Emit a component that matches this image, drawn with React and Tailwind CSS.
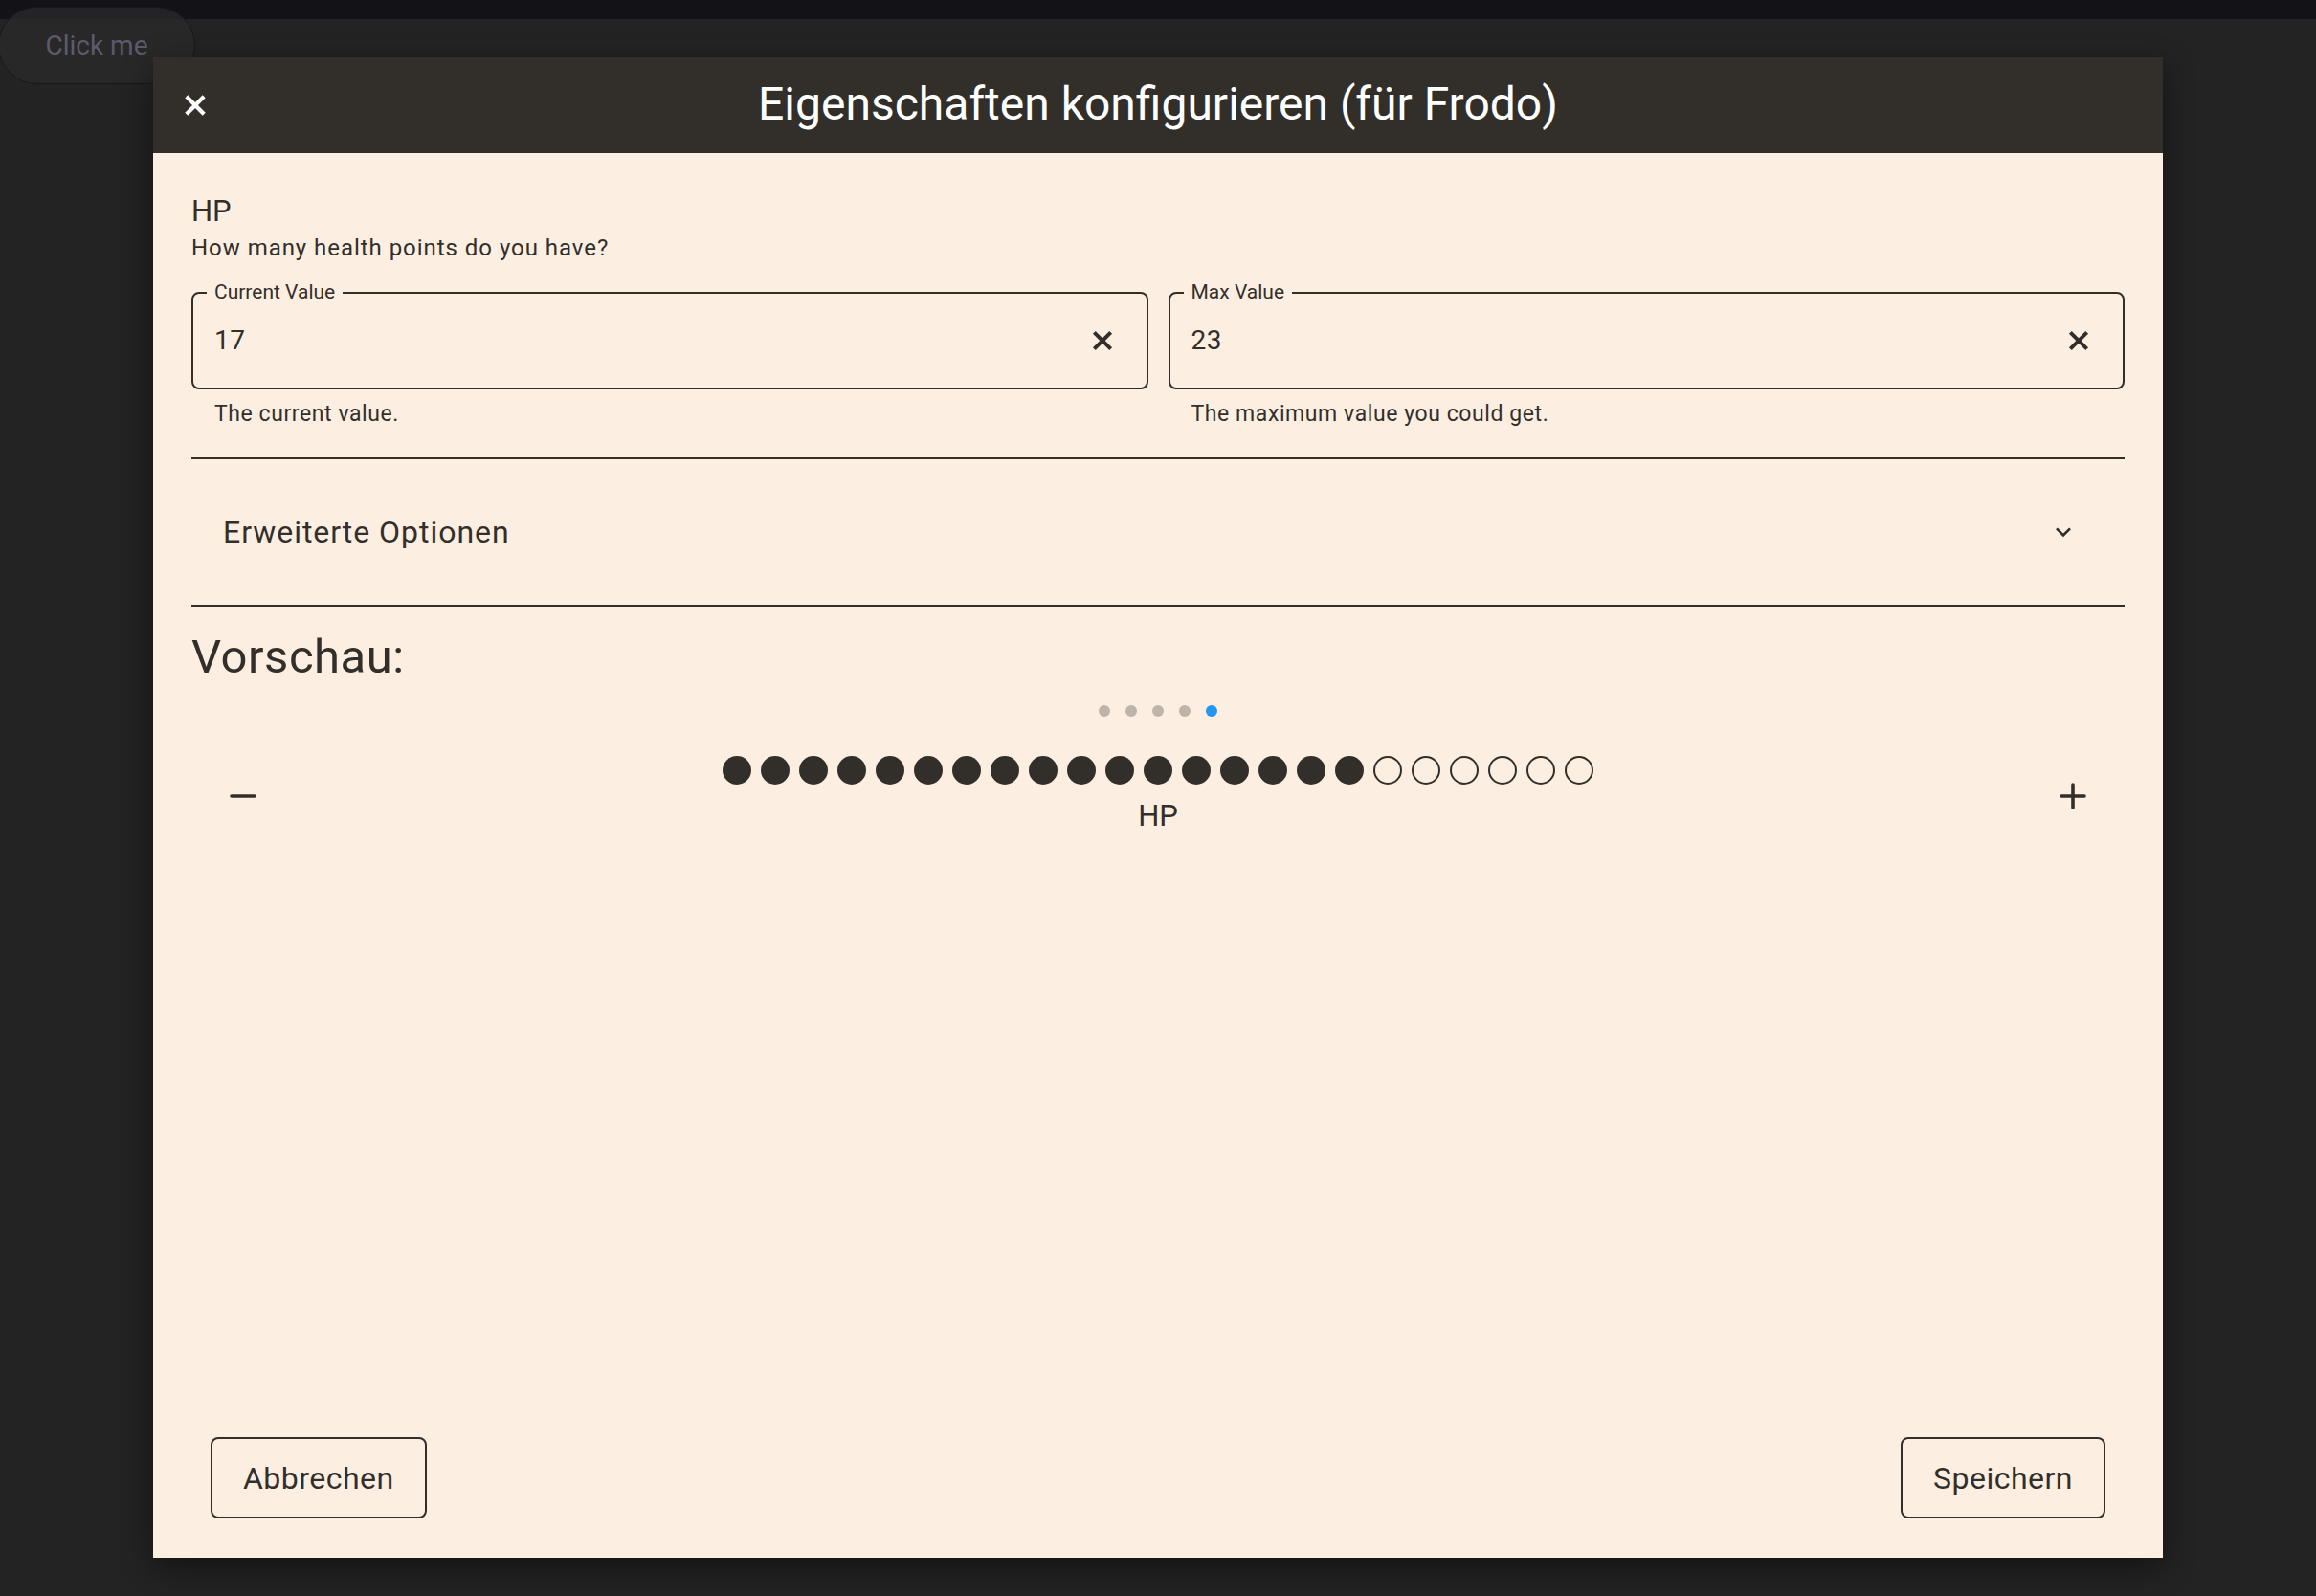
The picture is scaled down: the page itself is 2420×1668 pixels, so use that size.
import React from 'react';

const FONT = { fontFamily: 'Roboto, "Noto Sans", sans-serif' };

function CloseIcon({ className }) {
  return (
    <svg viewBox="0 0 24 24" className={className} fill="none" stroke="currentColor" strokeWidth="3">
      <path d="M5.5 5.5L18.5 18.5M18.5 5.5L5.5 18.5" />
    </svg>
  );
}

function ChevronDown({ className }) {
  return (
    <svg viewBox="0 0 24 24" className={className} fill="currentColor">
      <path d="M7.41,8.58L12,13.17L16.59,8.58L18,10L12,16L6,10L7.41,8.58Z" />
    </svg>
  );
}

function PlusMinus({ plus }) {
  return (
    <svg viewBox="0 0 30 30" className="size-[30px]" fill="none" stroke="currentColor" strokeWidth="3.6" strokeLinecap="round">
      <line x1="3" y1="15" x2="27" y2="15" />
      {plus && <line x1="15" y1="3" x2="15" y2="27" />}
    </svg>
  );
}

function Field({ label, value, hint }) {
  return (
    <div className="flex-1">
      <div className="relative flex h-[102px] items-center rounded-[8px] border-2 border-[#322f2a] pl-[22px] pr-[30px]">
        <span className="absolute left-[14px] top-[-15px] bg-[#fdeee2] px-[8px] text-[21px] leading-[26px]">{label}</span>
        <span className="flex-1 text-[28px] tracking-[0.02em]">{value}</span>
        <CloseIcon className="size-[32px]" />
      </div>
      <p className="mt-[10px] pl-[24px] text-[23px] leading-[32px] tracking-[0.025em]">{hint}</p>
    </div>
  );
}

export default function App() {
  const total = 23;
  const current = 17;
  const dots = Array.from({ length: total }, (_, i) => i < current);

  return (
    <div className="relative h-screen w-full overflow-hidden bg-[#232323] text-[#322f2a]" style={FONT}>
      <div className="h-[20px] bg-[#131217]" />

      <button className="absolute left-[-2px] top-[7px] flex h-[81px] w-[206px] items-center justify-center rounded-full border border-[#19191b] bg-[#29292b]/80 text-[28px] text-[#5c5a6b]">
        Click me
      </button>

      <div className="relative ml-[160px] mt-[40px] flex h-[1568px] w-[2100px] flex-col bg-[#fdeee2] shadow-[0_10px_30px_rgba(0,0,0,0.45)]">
        <header className="relative flex h-[100px] shrink-0 items-center justify-center bg-[#322f2a] text-white">
          <CloseIcon className="absolute left-[27px] top-[33px] size-[34px]" />
          <h1 className="-mt-[3px] text-[48px] leading-none">Eigenschaften konfigurieren (für Frodo)</h1>
        </header>

        <div className="flex flex-1 flex-col px-[40px] pt-[41px]">
          <h2 className="text-[31px] leading-[40px]">HP</h2>
          <p className="mt-[2px] text-[24px] leading-[32px] tracking-[0.04em]">How many health points do you have?</p>

          <div className="mt-[30px] flex gap-[21px]">
            <Field label="Current Value" value="17" hint="The current value." />
            <Field label="Max Value" value="23" hint="The maximum value you could get." />
          </div>

          <div className="mt-[29px] flex h-[156px] items-center justify-between border-y-2 border-[#322f2a] pl-[33px] pr-[48px]">
            <span className="text-[32px] tracking-[0.03em]">Erweiterte Optionen</span>
            <ChevronDown className="size-[32px]" />
          </div>

          <h2 className="mt-[24px] text-[49px] leading-[58px] tracking-[0.01em]">Vorschau:</h2>

          <div className="mt-[21px] flex justify-center gap-[16px]">
            {[0, 1, 2, 3, 4].map((i) => (
              <span key={i} className={i === 4 ? 'size-[12px] rounded-full bg-[#2196f3]' : 'size-[12px] rounded-full bg-[#bfb4aa]'} />
            ))}
          </div>

          <div className="mt-[41px] flex items-center justify-between">
            <button className="flex w-[108px] justify-center">
              <PlusMinus />
            </button>
            <div className="flex flex-col items-center">
              <div className="flex gap-[10px]">
                {dots.map((filled, i) => (
                  <span
                    key={i}
                    className={filled ? 'size-[30px] rounded-full bg-[#322f2a]' : 'size-[30px] rounded-full border-2 border-[#322f2a]'}
                  />
                ))}
              </div>
              <span className="mt-[13px] text-[31px] leading-[40px]">HP</span>
            </div>
            <button className="flex w-[108px] justify-center">
              <PlusMinus plus />
            </button>
          </div>

          <div className="mt-auto flex justify-between px-[20px] pb-[41px]">
            <button className="h-[85px] rounded-[8px] border-2 border-[#322f2a] px-[32px] text-[32px] tracking-[0.015em]">Abbrechen</button>
            <button className="h-[85px] rounded-[8px] border-2 border-[#322f2a] px-[32px] text-[32px] tracking-[0.015em]">Speichern</button>
          </div>
        </div>
      </div>
    </div>
  );
}
